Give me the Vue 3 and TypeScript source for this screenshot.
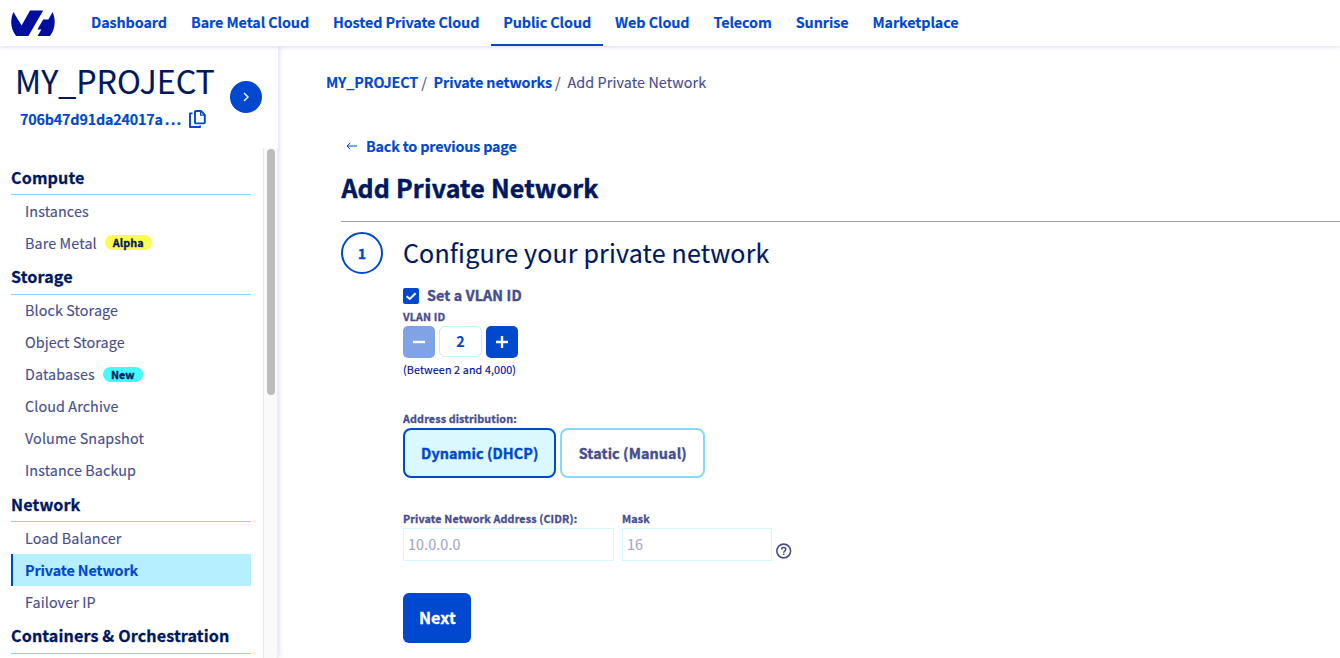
<script setup lang="ts">
import { ref } from 'vue'

interface MenuItem { label: string; badge?: string; tone?: string; active?: boolean }
interface MenuSection { title: string; items: MenuItem[] }

const tabs: string[] = ['Dashboard', 'Bare Metal Cloud', 'Hosted Private Cloud', 'Public Cloud', 'Web Cloud', 'Telecom', 'Sunrise', 'Marketplace']
const activeTab = ref('Public Cloud')

const sections: MenuSection[] = [
  { title: 'Compute', items: [{ label: 'Instances' }, { label: 'Bare Metal', badge: 'Alpha', tone: 'alpha' }] },
  {
    title: 'Storage',
    items: [
      { label: 'Block Storage' },
      { label: 'Object Storage' },
      { label: 'Databases', badge: 'New', tone: 'new' },
      { label: 'Cloud Archive' },
      { label: 'Volume Snapshot' },
      { label: 'Instance Backup' },
    ],
  },
  { title: 'Network', items: [{ label: 'Load Balancer' }, { label: 'Private Network', active: true }, { label: 'Failover IP' }] },
  { title: 'Containers & Orchestration', items: [] },
]

const vlanId = ref(2)
const mode = ref<'dhcp' | 'static'>('dhcp')
</script>

<template>
  <div class="page">
    <header class="topbar">
      <svg class="logo" width="44" height="27" viewBox="0 0 44 27">
        <path d="M2.4 2L10.6 15.4L19 0.4H32.2L17.4 26H5C-0.6 18.6-1 9.8 2.4 2Z" />
        <path d="M41.6 2C45 9.8 44.4 18.6 39 26H26.6L30.4 19.4H26.4L32.2 9.4H37.4Z" />
      </svg>
      <nav class="tabs">
        <a v-for="t in tabs" :key="t" class="tab" :class="{ on: t === activeTab }" @click="activeTab = t">{{ t }}</a>
      </nav>
    </header>

    <div class="body">
      <aside class="side">
        <div class="project">
          <div class="project-info">
            <div class="project-name">MY_PROJECT</div>
            <div class="project-id">
              <span>706b47d91da24017a<span class="dots">...</span></span>
              <svg width="17" height="18" viewBox="0 0 17 18" fill="none" stroke="#0048cd" stroke-width="1.9">
                <path d="M3.6 3.4H1V17H11V15.6" stroke-linejoin="round" />
                <path d="M7 1H12L15.8 4.8V12.6Q15.8 13.4 15 13.4H7Q6 13.4 6 12.4V2Q6 1 7 1Z" />
                <path d="M11.6 1V5.2H15.8" stroke-width="1.3" />
              </svg>
            </div>
          </div>
          <button class="expand">
            <svg width="6" height="10" viewBox="0 0 6 10"><path d="M1 1L5 5L1 9" fill="none" stroke="#fff" stroke-width="1.4" /></svg>
          </button>
        </div>
        <div class="scroller">
          <div class="menu">
            <section v-for="s in sections" :key="s.title">
              <h3 class="menu-title">{{ s.title }}</h3>
              <a v-for="i in s.items" :key="i.label" class="menu-item" :class="{ active: i.active }">
                <span>{{ i.label }}</span>
                <span v-if="i.badge" class="badge" :class="i.tone">{{ i.badge }}</span>
              </a>
            </section>
          </div>
          <div class="track"><div class="thumb"></div></div>
        </div>
      </aside>

      <main class="main">
        <div class="crumbs"><a>MY_PROJECT</a><i>/</i><a>Private networks</a><i>/</i><span>Add Private Network</span></div>
        <div class="content">
          <a class="back">
            <svg width="11" height="8" viewBox="0 0 11 8"><path d="M11 4H1M4.2 0.8L1 4L4.2 7.2" fill="none" stroke="#0048cd" stroke-width="1" /></svg>
            <span>Back to previous page</span>
          </a>
          <h1 class="title">Add Private Network</h1>
          <div class="step">
            <div class="step-no">1</div>
            <div class="form">
              <h2 class="step-title">Configure your private network</h2>
              <label class="check">
                <span class="box">
                  <svg width="16" height="16" viewBox="0 0 16 16"><path d="M3.6 8.2L6.8 11L12.6 5.2" fill="none" stroke="#fff" stroke-width="2" /></svg>
                </span>
                <span>Set a VLAN ID</span>
              </label>
              <div class="small vlan-label">VLAN ID</div>
              <div class="stepper">
                <button class="sq off"><svg width="12" height="12" viewBox="0 0 12 12"><path d="M0 6H12" stroke="#fff" stroke-width="2.4" /></svg></button>
                <div class="num">{{ vlanId }}</div>
                <button class="sq"><svg width="12" height="12" viewBox="0 0 12 12"><path d="M0 6H12M6 0V12" stroke="#fff" stroke-width="2.4" /></svg></button>
              </div>
              <div class="hint">(Between 2 and 4,000)</div>
              <div class="small dist-label">Address distribution:</div>
              <div class="modes">
                <button class="mode dyn" :class="{ sel: mode === 'dhcp' }" @click="mode = 'dhcp'">Dynamic (DHCP)</button>
                <button class="mode sta" :class="{ sel: mode === 'static' }" @click="mode = 'static'">Static (Manual)</button>
              </div>
              <div class="fields">
                <div class="field addr"><div class="small">Private Network Address (CIDR):</div><div class="input">10.0.0.0</div></div>
                <div class="field mask"><div class="small">Mask</div><div class="input">16</div></div>
                <svg class="help" width="16" height="16" viewBox="0 0 16 16" fill="none" stroke="#484e8c">
                  <circle cx="7.7" cy="8" r="6.9" stroke-width="1.6" />
                  <path d="M5.6 6.4C5.6 3.7 9.8 3.8 9.8 6.3C9.8 7.8 7.7 7.9 7.7 9.7M7.7 10.6V12.1" stroke-width="1.5" />
                </svg>
              </div>
              <button class="next">Next</button>
            </div>
          </div>
        </div>
      </main>
    </div>
  </div>
</template>

<style>
html, body { margin: 0; overflow: hidden; background: #fff; }
</style>

<style scoped>
.page { width: 1340px; height: 658px; overflow: hidden; display: flex; flex-direction: column; background: #fff; font-family: "Noto Sans CJK SC", "Noto Sans", sans-serif; font-size: 14.33px; letter-spacing: .11px; color: #484e8c; -webkit-text-stroke: .15px currentColor; }
.page * { box-sizing: border-box; }
button { font-family: inherit; letter-spacing: inherit; border: 0; padding: 0; margin: 0; display: flex; align-items: center; justify-content: center; }
h1, h2, h3 { margin: 0; }
.topbar { height: 46px; flex: none; display: flex; align-items: center; padding-left: 11px; background: #fff; box-shadow: 0 0 6px rgba(0, 14, 156, .2); position: relative; z-index: 2; }
.logo { fill: #000e9c; width: 44px; margin-right: 24px; }
.tabs { display: flex; height: 46px; }
.tab { padding: 0 12px; line-height: 43px; font-weight: 700; letter-spacing: -.085px; color: #0048cd; white-space: nowrap; border-bottom: 2px solid transparent; }
.tab.on { border-bottom-color: #0048cd; }
.body { flex: 1; display: flex; min-height: 0; }
.side { width: 278px; flex: none; display: flex; flex-direction: column; box-shadow: 0 0 6px rgba(0, 14, 156, .2); position: relative; z-index: 1; background: #fff; }
.project { height: 102px; flex: none; display: flex; padding: 14px 16px 0 15px; justify-content: space-between; }
.project-name { font-size: 32.2px; line-height: 40px; letter-spacing: 0; color: #00185e; white-space: nowrap; }
.project-id { display: flex; align-items: center; gap: 7px; padding-left: 5px; margin-top: 8px; line-height: 22px; font-weight: 700; letter-spacing: -.19px; color: #0048cd; }
.dots { letter-spacing: 1.2px; margin-left: 2px; }
.expand { width: 32px; height: 32px; border-radius: 50%; background: #0048cd; margin-top: 21px; }
.scroller { flex: 1; display: flex; min-height: 0; overflow: hidden; }
.menu { width: 263px; padding: 11.5px 12px 0 11px; }
.menu-title { height: 35.5px; border-bottom: 1px solid #85d9fd; font-size: 16.1px; line-height: 35px; font-weight: 700; letter-spacing: .13px; -webkit-text-stroke-width: .3px; color: #00185e; white-space: nowrap; }
.menu-item { height: 32px; display: flex; align-items: center; padding: 0 0 .6px 12px; border-left: 2px solid transparent; line-height: 32px; white-space: nowrap; }
.menu-item.active { background: #b6efff; border-left-color: #0048cd; color: #0048cd; font-weight: 700; letter-spacing: -.1px; }
.badge { height: 15px; line-height: 15px; border-radius: 8px; padding: 0 8px; font-size: 10.75px; font-weight: 700; letter-spacing: .1px; -webkit-text-stroke-width: .3px; color: #00185e; margin-left: 8px; }
.alpha { background: #fcfc50; }
.new { background: #42fcfc; }
.track { width: 15px; border-left: 1px solid #e8e8e8; border-right: 1px solid #ededed; background: #fafafa; padding: 1px 0 0 3px; }
.thumb { width: 8px; height: 246px; border-radius: 4px; background: #bcbcbc; }
.main { flex: 1; padding-left: 48px; min-width: 0; }
.crumbs { margin-top: 25px; height: 22px; line-height: 22px; display: flex; white-space: nowrap; }
.crumbs a { font-weight: 700; letter-spacing: -.11px; color: #0048cd; }
.crumbs i { font-style: normal; margin: 0 6.7px 0 3px; }
.content { padding-left: 15px; }
.back { display: flex; align-items: center; gap: 9px; margin-top: 42px; height: 22px; padding-left: 5px; line-height: 22px; font-weight: 700; letter-spacing: -.18px; color: #0048cd; }
.title { font-size: 25px; letter-spacing: .17px; -webkit-text-stroke-width: .5px; line-height: 36px; height: 65px; padding: 12px 0 0 .4px; color: #00185e; border-bottom: 1px solid #a6a6a6; }
.step { display: flex; gap: 20px; padding-top: 10px; }
.step-no { width: 42px; height: 42px; border: 2px solid #0048cd; border-radius: 50%; color: #0048cd; font-weight: 700; -webkit-text-stroke-width: .5px; line-height: 38px; text-align: center; font-size: 13.4px; }
.step-title { font-size: 25px; letter-spacing: .16px; line-height: 40px; height: 42px; font-weight: 400; color: #00185e; white-space: nowrap; }
.check { display: flex; align-items: center; gap: 8px; height: 16px; margin-top: 14px; font-weight: 700; line-height: 14px; -webkit-text-stroke-width: .4px; }
.check > span:last-child { padding-bottom: 2px; }
.box { width: 16px; height: 16px; border-radius: 2px; background: #0048cd; }
.box svg { display: block; }
.small { font-size: 10.75px; font-weight: 700; letter-spacing: .13px; -webkit-text-stroke-width: .3px; line-height: 18px; height: 18px; white-space: nowrap; }
.vlan-label { margin-top: 4px; }
.stepper { display: flex; gap: 4px; height: 32px; }
.sq { width: 32px; height: 32px; border-radius: 5px; background: #0048cd; }
.sq.off { background: #80a3e6; }
.num { width: 43px; height: 31px; border: 1px solid #bef1ff; border-radius: 6px; text-align: center; line-height: 28px; font-weight: 700; color: #0048cd; }
.hint { font-size: 10.75px; line-height: 18px; margin-top: 3px; color: #000e9c; height: 18px; letter-spacing: .12px; }
.dist-label { margin-top: 31px; }
.modes { display: flex; gap: 4px; }
.mode { height: 50px; border: 2px solid #85d9fd; border-radius: 8px; background: #fff; font-size: 14.33px; font-weight: 700; letter-spacing: .11px; -webkit-text-stroke-width: .4px; padding: 0 0 2px .6px; color: #484e8c; white-space: nowrap; }
.dyn { width: 153px; }
.sta { width: 145px; }
.mode.sel { background: #dbf8ff; border-color: #0048cd; color: #0048cd; }
.fields { display: flex; margin-top: 32px; align-items: flex-end; }
.field { margin-right: 8px; }
.addr { width: 211px; }
.mask { width: 150px; margin-right: 4px; }
.input { height: 33px; border: 1px solid #d5f8ff; line-height: 30px; padding-left: 4px; color: #a4a7c7; }
.help { margin-bottom: 2px; }
.next { width: 68px; height: 50px; border-radius: 6px; background: #0048cd; color: #fff; font-size: 16.1px; font-weight: 700; -webkit-text-stroke-width: .3px; margin-top: 32px; padding: 0 0 2px .8px; }
</style>
